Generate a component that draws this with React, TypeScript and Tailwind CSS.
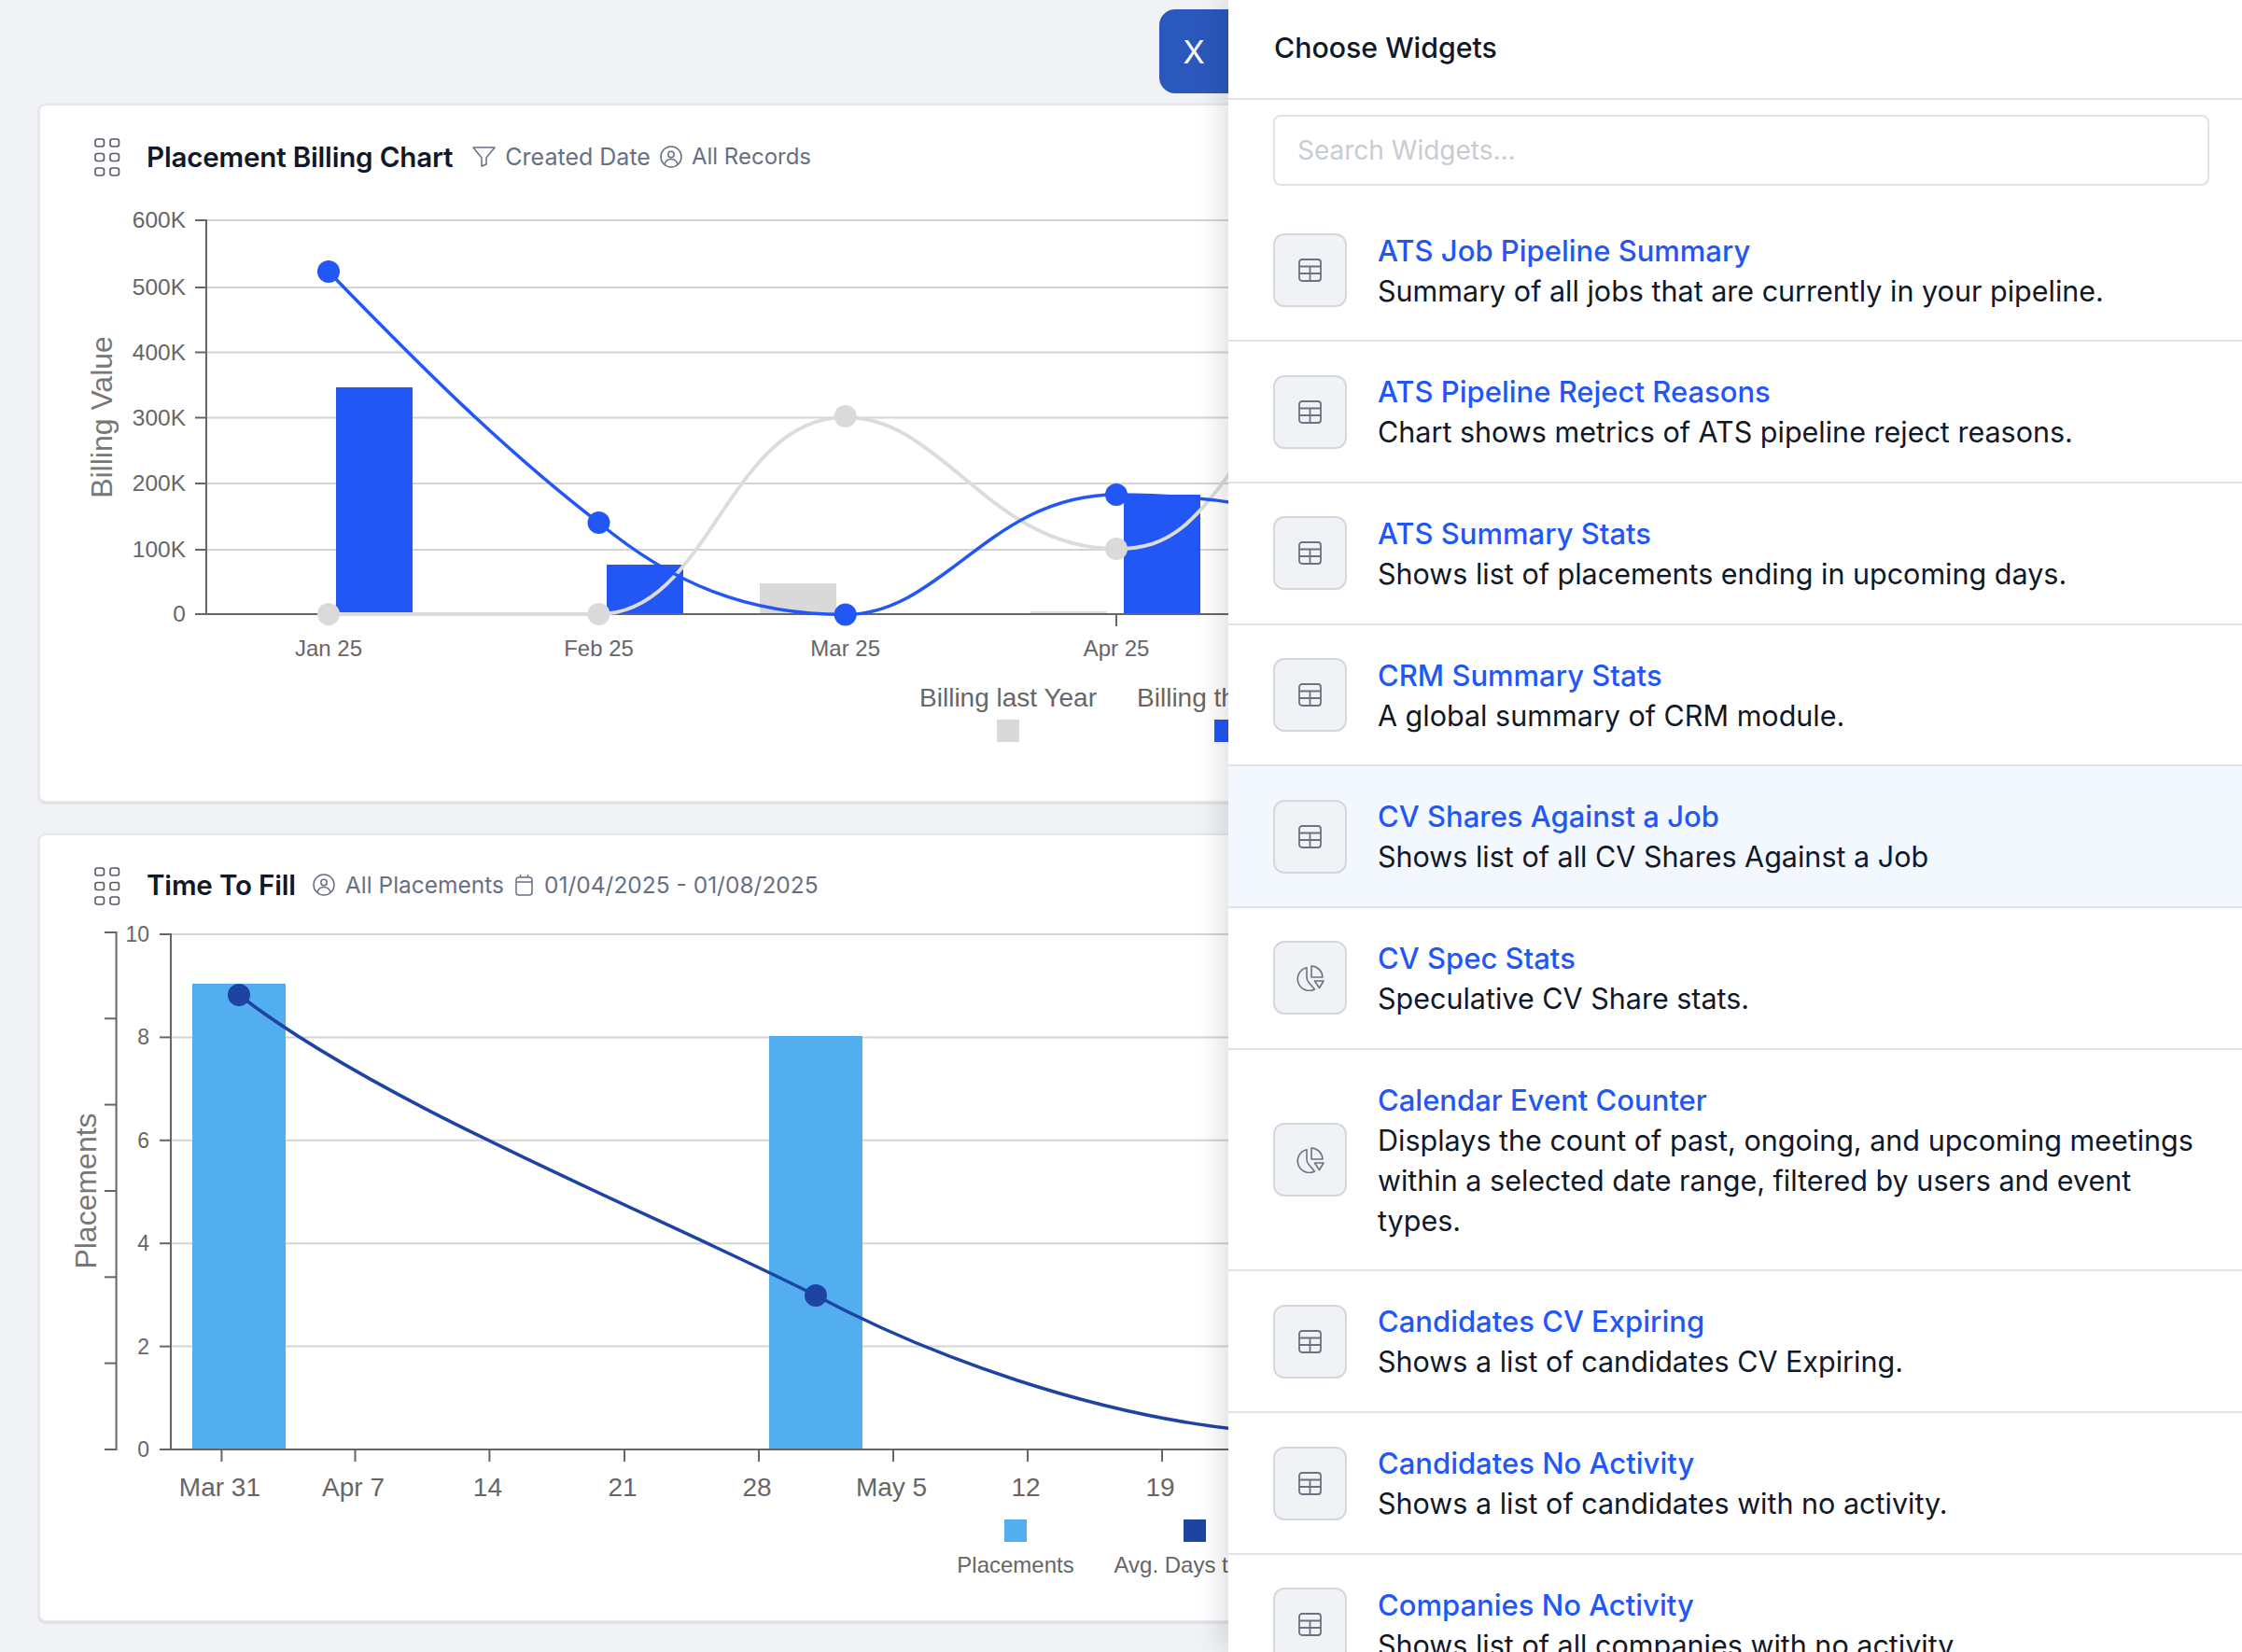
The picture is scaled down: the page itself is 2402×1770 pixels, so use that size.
import React from 'react';

const BLUE = '#2257f6';
const GRAY = '#d9d9d9';
const AXIS = '#666666';
const GRID = '#d4d4d4';

function GripIcon() {
  const cells = [0, 1, 2].flatMap((r) => [0, 1].map((c) => ({ x: 1 + c * 16, y: 1 + r * 15.5 })));
  return (
    <svg width="28" height="41" viewBox="0 0 28 41" fill="none" className="shrink-0">
      {cells.map((p, i) => (
        <rect key={i} x={p.x} y={p.y} width="9.5" height="8" rx="2.5" stroke="#555b66" strokeWidth="1.6" />
      ))}
    </svg>
  );
}

function FunnelIcon() {
  return (
    <svg width="25" height="22" viewBox="0 0 25 22" fill="none" className="shrink-0">
      <path d="M1 1H24L15 12V19L10 21V12Z" stroke="#667085" strokeWidth="1.5" strokeLinejoin="round" />
    </svg>
  );
}

function UserIcon() {
  return (
    <svg width="24" height="24" viewBox="0 0 24 24" fill="none" className="shrink-0">
      <circle cx="12" cy="12" r="11" stroke="#667085" strokeWidth="1.5" />
      <circle cx="12" cy="9.5" r="3.2" stroke="#667085" strokeWidth="1.5" />
      <path d="M5 20c1-3.8 3.6-5.5 7-5.5s6 1.7 7 5.5" stroke="#667085" strokeWidth="1.5" />
    </svg>
  );
}

function CalendarIcon() {
  return (
    <svg width="19" height="24" viewBox="0 0 19 24" fill="none" className="shrink-0">
      <rect x="1" y="4" width="17" height="19" rx="3" stroke="#667085" strokeWidth="1.5" />
      <path d="M1 9H18M5.5 1V4M13.5 1V4" stroke="#667085" strokeWidth="1.5" />
    </svg>
  );
}

function TableIcon() {
  return (
    <svg width="25" height="25" viewBox="0 0 25 25" fill="none">
      <rect x="1" y="1" width="23" height="23" rx="3" stroke="#6b7280" strokeWidth="1.8" />
      <path d="M1 8.5H24M1 16H24M12.5 8.5V24" stroke="#6b7280" strokeWidth="1.8" />
    </svg>
  );
}

function PieIcon() {
  return (
    <svg width="30" height="28" viewBox="0 0 30 28" fill="none">
      <path d="M11 2.7A12.5 12.5 0 1 0 19.5 26L13 18.5Q11 16.5 11 13Z" stroke="#6b7280" strokeWidth="1.6" strokeLinejoin="round" />
      <path d="M16 1A12.5 12.5 0 0 1 28 13H16Z" stroke="#6b7280" strokeWidth="1.6" strokeLinejoin="round" />
      <path d="M19.5 17H29L24.5 24.5Z" stroke="#6b7280" strokeWidth="1.6" strokeLinejoin="round" />
    </svg>
  );
}

const widgets = [
  { title: 'ATS Job Pipeline Summary', desc: 'Summary of all jobs that are currently in your pipeline.', icon: 'table' },
  { title: 'ATS Pipeline Reject Reasons', desc: 'Chart shows metrics of ATS pipeline reject reasons.', icon: 'table' },
  { title: 'ATS Summary Stats', desc: 'Shows list of placements ending in upcoming days.', icon: 'table' },
  { title: 'CRM Summary Stats', desc: 'A global summary of CRM module.', icon: 'table' },
  { title: 'CV Shares Against a Job', desc: 'Shows list of all CV Shares Against a Job', icon: 'table', active: true },
  { title: 'CV Spec Stats', desc: 'Speculative CV Share stats.', icon: 'pie' },
  {
    title: 'Calendar Event Counter',
    desc: 'Displays the count of past, ongoing, and upcoming meetings\nwithin a selected date range, filtered by users and event\ntypes.',
    icon: 'pie'
  },
  { title: 'Candidates CV Expiring', desc: 'Shows a list of candidates CV Expiring.', icon: 'table' },
  { title: 'Candidates No Activity', desc: 'Shows a list of candidates with no activity.', icon: 'table' },
  { title: 'Companies No Activity', desc: 'Shows list of all companies with no activity.', icon: 'table' }
];

function BillingChart() {
  const yLabels = ['600K', '500K', '400K', '300K', '200K', '100K', '0'];
  const yPos = [236, 308, 377.5, 447.5, 518, 589, 658];
  const xLabels = [
    { x: 352, t: 'Jan 25' },
    { x: 641.5, t: 'Feb 25' },
    { x: 905.7, t: 'Mar 25' },
    { x: 1196, t: 'Apr 25' }
  ];
  return (
    <svg viewBox="43 225 2316 633" className="block h-[633px] w-[2316px]" fontFamily="'Liberation Sans', Arial, sans-serif">
      {yLabels.map((l, i) => {
        const y = yPos[i];
        return (
          <g key={l}>
            {i < 6 && <line x1="221" x2="2300" y1={y} y2={y} stroke={GRID} strokeWidth="2" />}
            <line x1="209" x2="221" y1={y} y2={y} stroke={AXIS} strokeWidth="2" />
            <text x="199" y={y + 8} textAnchor="end" fontSize="24.5" fill={AXIS}>{l}</text>
          </g>
        );
      })}
      <line x1="221" x2="221" y1="235" y2="659" stroke={AXIS} strokeWidth="2" />

      <rect x="360" y="415" width="82" height="243" fill={BLUE} />
      <rect x="650" y="605" width="82" height="53" fill={BLUE} />
      <rect x="814" y="625" width="82" height="33" fill={GRAY} />
      <rect x="1103.5" y="655" width="82" height="3" fill={GRAY} />
      <rect x="1204" y="530" width="82" height="128" fill={BLUE} />

      <line x1="221" x2="2300" y1="658" y2="658" stroke={AXIS} strokeWidth="2" />
      <line x1="1196" x2="1196" y1="658" y2="671" stroke={AXIS} strokeWidth="2" />
      {xLabels.map((l) => (
        <text key={l.t} x={l.x} y="703" textAnchor="middle" fontSize="24" fill={AXIS}>{l.t}</text>
      ))}

      <path
        d="M352 658H641.5C760 658 780 447 905.7 447C1010 447 1060 588 1196 588C1255 588 1280 560 1330 490"
        fill="none"
        stroke="#dcdcdc"
        strokeWidth="4"
      />
      <path
        d="M352 291C450 392 540 482 641.5 560C720 625 800 658.5 905.7 658.5C1010 658.5 1060 530 1196 530C1240 530 1280 532 1330 540"
        fill="none"
        stroke={BLUE}
        strokeWidth="3.5"
      />
      {[[352, 658], [641.5, 658], [905.7, 446], [1196, 588]].map(([cx, cy], i) => (
        <circle key={i} cx={cx} cy={cy} r="12" fill="#dadada" />
      ))}
      {[[352, 291], [641.5, 560], [905.7, 658.5], [1196, 530]].map(([cx, cy], i) => (
        <circle key={i} cx={cx} cy={cy} r="12" fill={BLUE} />
      ))}

      <text transform="translate(120 447) rotate(-90)" textAnchor="middle" fontSize="32" fill="#777777">Billing Value</text>

      <text x="1080" y="757" textAnchor="middle" fontSize="28" fill={AXIS}>Billing last Year</text>
      <rect x="1068" y="771" width="24" height="24" fill={GRAY} />
      <text x="1313" y="757" textAnchor="middle" fontSize="28" fill={AXIS}>Billing this Year</text>
      <rect x="1301" y="771" width="24" height="24" fill={BLUE} />
    </svg>
  );
}

function TimeToFillChart() {
  const yLabels = ['10', '8', '6', '4', '2', '0'];
  const ticks = [237.4, 380.5, 524.4, 669, 813, 957, 1101, 1245];
  const xLabels = ['Mar 31', 'Apr 7', '14', '21', '28', 'May 5', '12', '19'];
  const left = [999, 1091.3, 1183.6, 1276, 1368.3, 1460.6, 1553];
  return (
    <svg viewBox="43 985 2316 750" className="block h-[750px] w-[2316px]" fontFamily="'Liberation Sans', Arial, sans-serif">
      {yLabels.map((l, i) => {
        const y = 1001 + i * 110.4;
        return (
          <g key={l}>
            {i < 5 && <line x1="183" x2="2300" y1={y} y2={y} stroke={GRID} strokeWidth="2" />}
            <line x1="171" x2="183" y1={y} y2={y} stroke={AXIS} strokeWidth="2" />
            <text x="160" y={y + 8} textAnchor="end" fontSize="23" fill={AXIS}>{l}</text>
          </g>
        );
      })}
      <rect x="206" y="1054" width="100" height="499" fill="#52aeef" />
      <rect x="824" y="1110" width="100" height="443" fill="#52aeef" />

      <line x1="183" x2="183" y1="1000" y2="1554" stroke={AXIS} strokeWidth="2" />
      <line x1="124.6" x2="124.6" y1="998" y2="1554" stroke={AXIS} strokeWidth="2" />
      {left.map((y) => (
        <line key={y} x1="112" x2="125" y1={y} y2={y} stroke={AXIS} strokeWidth="2" />
      ))}
      <line x1="171" x2="2300" y1="1553" y2="1553" stroke={AXIS} strokeWidth="2" />
      {ticks.map((x, i) => (
        <g key={x}>
          <line x1={x} x2={x} y1="1553" y2="1566" stroke={AXIS} strokeWidth="2" />
          <text x={x - 2} y="1603" textAnchor="middle" fontSize="28" fill={AXIS}>{xLabels[i]}</text>
        </g>
      ))}

      <path
        d="M256 1066C410 1185 690 1295 874 1388C1000 1455 1170 1515 1330 1532"
        fill="none"
        stroke="#1e44a3"
        strokeWidth="3.5"
      />
      <circle cx="256" cy="1066" r="12" fill="#1e44a3" />
      <circle cx="874" cy="1388" r="12" fill="#1e44a3" />

      <text transform="translate(103 1276) rotate(-90)" textAnchor="middle" fontSize="32" fill="#777777">Placements</text>

      <rect x="1076" y="1628" width="24" height="24" fill="#52aeef" />
      <text x="1088" y="1685" textAnchor="middle" fontSize="24" fill={AXIS}>Placements</text>
      <rect x="1268" y="1628" width="24" height="24" fill="#1e44a3" />
      <text x="1280" y="1685" textAnchor="middle" fontSize="24" fill={AXIS}>Avg. Days to Fill</text>
    </svg>
  );
}

export default function App() {
  return (
    <div className="relative h-[1770px] w-[2402px] overflow-hidden bg-[#f0f2f6] font-['Inter','Noto_Sans',sans-serif]">
      <div className="ml-[41px] w-[2320px] pt-[111px]">
        <div className="h-[749px] rounded-lg border-2 border-[#e6e8ec] bg-white shadow-sm">
          <div className="flex h-[112px] items-start pl-[58px] pt-[35px]">
            <GripIcon />
            <div className="ml-[28px] mt-[2px] flex items-center text-[25px] leading-[36px] text-[#667085]">
              <span className="mr-[21px] text-[29.6px] font-semibold tracking-[-0.2px] text-[#111827]">Placement Billing Chart</span>
              <FunnelIcon />
              <span className="ml-[10px] mr-[10px]">Created Date</span>
              <UserIcon />
              <span className="ml-[10px] text-[24px]">All Records</span>
            </div>
          </div>
          <BillingChart />
        </div>

        <div className="mt-[33px] h-[845px] rounded-lg border-2 border-[#e6e8ec] bg-white shadow-sm">
          <div className="flex h-[90px] items-start pl-[58px] pt-[34px]">
            <GripIcon />
            <div className="ml-[28px] mt-[1px] flex items-center text-[24.5px] leading-[36px] text-[#667085]">
              <span className="mr-[18px] text-[29.6px] font-semibold tracking-[-0.2px] text-[#111827]">Time To Fill</span>
              <UserIcon />
              <span className="ml-[11px] mr-[12px]">All Placements</span>
              <CalendarIcon />
              <span className="ml-[12px]">01/04/2025 - 01/08/2025</span>
            </div>
          </div>
          <TimeToFillChart />
        </div>
      </div>

      <button
        type="button"
        className="absolute left-[1242px] top-[10px] flex h-[90px] w-[74px] items-center justify-center rounded-l-[17px] bg-[#2b58bc] text-[34px] text-white"
      >
        X
      </button>

      <div className="absolute inset-y-0 left-[1316px] w-[1086px] overflow-hidden bg-white shadow-[-8px_0_28px_rgba(0,0,0,0.12)]">
        <div className="flex h-[107px] items-center border-b-2 border-[#dfe2e8] pb-[2px] pl-[49px] text-[30.3px] font-medium text-[#111827]">
          Choose Widgets
        </div>
        <div className="pl-[48px] pt-[16px]">
          <input
            placeholder="Search Widgets..."
            className="block h-[76px] w-[1003px] rounded-lg border-2 border-[#dfe2e8] pl-[24px] text-[28px] outline-none placeholder:text-[#c8ccd2]"
          />
        </div>
        <div className="mt-[15.5px]">
          {widgets.map((w) => (
            <div
              key={w.title}
              className={
                w.active
                  ? 'flex items-center border-b-2 border-[#dfe2e8] bg-[#f3f7fe] pb-[31.7px] pl-[48px] pt-[32px]'
                  : 'flex items-center border-b-2 border-[#dfe2e8] bg-white pb-[31.7px] pl-[48px] pt-[32px]'
              }
            >
              <div className="mr-[33px] flex h-[79px] w-[79px] shrink-0 items-center justify-center rounded-xl border-2 border-[#d3d7de] bg-[#f0f2f5]">
                {w.icon === 'pie' ? <PieIcon /> : <TableIcon />}
              </div>
              <div className="leading-[43px]">
                <div className="text-[31px] font-medium text-[#2257f6]">{w.title}</div>
                <div className="whitespace-pre-line text-[30.5px] text-[#111827]">{w.desc}</div>
              </div>
            </div>
          ))}
        </div>
      </div>
    </div>
  );
}
